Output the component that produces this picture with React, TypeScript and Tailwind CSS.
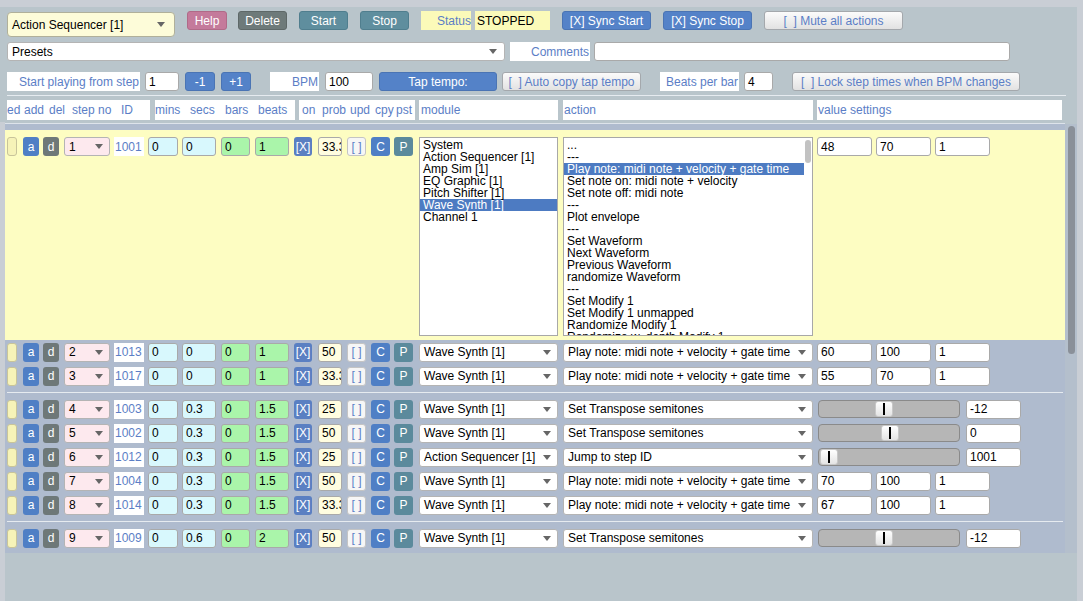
import React from "react";

const F = "font-['Liberation_Sans',Arial,Helvetica,sans-serif]";

function Arrow() {
  return (
    <svg width="8" height="5" viewBox="0 0 8 5" className="shrink-0">
      <path d="M0 0h8L4 5z" fill="#666" />
    </svg>
  );
}

function Btn({ cls, children }: { cls: string; children: React.ReactNode }) {
  return (
    <div
      className={`h-[19px] rounded-[3px] flex items-center justify-center text-white text-[12px] leading-none shrink-0 ${cls}`}
    >
      {children}
    </div>
  );
}

function LightBtn({ cls, children }: { cls: string; children: React.ReactNode }) {
  return (
    <div
      className={`h-[19px] rounded-[3px] border border-[#a4a8ac] bg-gradient-to-b from-[#fbfbfb] to-[#e2e2e2] flex items-center justify-center text-[#5b7ec6] text-[12px] leading-none shrink-0 ${cls}`}
    >
      {children}
    </div>
  );
}

function Label({ cls, children }: { cls: string; children: React.ReactNode }) {
  return (
    <div className={`h-[19px] flex items-center justify-end text-[#5b7ec6] text-[12px] shrink-0 ${cls}`}>
      {children}
    </div>
  );
}

function Input({ cls, v }: { cls: string; v: string }) {
  return (
    <div
      className={`h-[19px] rounded-[3px] border border-[#a9a9a9] flex items-center pl-[3px] text-black text-[12px] overflow-hidden whitespace-nowrap shrink-0 ${cls}`}
    >
      {v}
    </div>
  );
}

function Sel({ cls, v }: { cls: string; v: string }) {
  return (
    <div
      className={`h-[19px] rounded-[3px] border border-[#b4b4b4] flex items-center justify-between pl-[4px] pr-[6px] text-black text-[12px] overflow-hidden whitespace-nowrap shrink-0 ${cls}`}
    >
      <span>{v}</span>
      <Arrow />
    </div>
  );
}

type RowD = {
  step: string;
  id: string;
  mins: string;
  secs: string;
  bars: string;
  beats: string;
  prob: string;
  module: string;
  action: string;
  vals?: string[];
  slider?: number;
  sval?: string;
};

const rows1: RowD[] = [
  { step: "2", id: "1013", mins: "0", secs: "0", bars: "0", beats: "1", prob: "50", module: "Wave Synth [1]", action: "Play note: midi note + velocity + gate time", vals: ["60", "100", "1"] },
  { step: "3", id: "1017", mins: "0", secs: "0", bars: "0", beats: "1", prob: "33.3", module: "Wave Synth [1]", action: "Play note: midi note + velocity + gate time", vals: ["55", "70", "1"] },
];
const rows2: RowD[] = [
  { step: "4", id: "1003", mins: "0", secs: "0.3", bars: "0", beats: "1.5", prob: "25", module: "Wave Synth [1]", action: "Set Transpose semitones", slider: 56, sval: "-12" },
  { step: "5", id: "1002", mins: "0", secs: "0.3", bars: "0", beats: "1.5", prob: "50", module: "Wave Synth [1]", action: "Set Transpose semitones", slider: 62, sval: "0" },
  { step: "6", id: "1012", mins: "0", secs: "0.3", bars: "0", beats: "1.5", prob: "25", module: "Action Sequencer [1]", action: "Jump to step ID", slider: 1, sval: "1001" },
  { step: "7", id: "1004", mins: "0", secs: "0.3", bars: "0", beats: "1.5", prob: "50", module: "Wave Synth [1]", action: "Play note: midi note + velocity + gate time", vals: ["70", "100", "1"] },
  { step: "8", id: "1014", mins: "0", secs: "0.3", bars: "0", beats: "1.5", prob: "33.3", module: "Wave Synth [1]", action: "Play note: midi note + velocity + gate time", vals: ["67", "100", "1"] },
];
const rows3: RowD[] = [
  { step: "9", id: "1009", mins: "0", secs: "0.6", bars: "0", beats: "2", prob: "50", module: "Wave Synth [1]", action: "Set Transpose semitones", slider: 56, sval: "-12" },
];

function LeftCells({ r }: { r: RowD }) {
  return (
    <>
      <div className="w-[10px] h-[19px] rounded-[3px] border border-[#c8c49a] bg-[#f6f3b8] shrink-0" />
      <Btn cls="ml-[6px] w-[16px] bg-[#4f7fc5]">a</Btn>
      <Btn cls="ml-[4px] w-[16px] bg-[#6e7878]">d</Btn>
      <Sel cls="ml-[5px] w-[46px] bg-[#fde9ee]" v={r.step} />
      <div className="ml-[4px] w-[30px] h-[19px] bg-white text-[#5b7ec6] text-[12px] flex items-center pl-[1px] shrink-0">
        {r.id}
      </div>
      <Input cls="ml-[4px] w-[30px] bg-[#d8f8fd]" v={r.mins} />
      <Input cls="ml-[4px] w-[34px] bg-[#d8f8fd]" v={r.secs} />
      <Input cls="ml-[5px] w-[29px] bg-[#aaf5aa]" v={r.bars} />
      <Input cls="ml-[5px] w-[34px] bg-[#aaf5aa]" v={r.beats} />
      <Btn cls="ml-[5px] w-[18px] bg-[#5a7fc2]">[X]</Btn>
      <Input cls="ml-[6px] w-[24px] bg-[#fffde0] pl-[2px]" v={r.prob} />
      <div className="ml-[5px] w-[19px] h-[19px] rounded-[3px] border border-[#c4c4c4] bg-[#f6f6f6] text-[#5b7ec6] text-[12px] flex items-center justify-center shrink-0">
        [ ]
      </div>
      <Btn cls="ml-[5px] w-[19px] bg-[#4f7fc5]">C</Btn>
      <Btn cls="ml-[4px] w-[19px] bg-[#5b8a9c]">P</Btn>
    </>
  );
}

function Slider({ pos }: { pos: number }) {
  return (
    <div className="ml-[5px] w-[142px] h-[18px] rounded-[4px] border border-[#8a8a8a] bg-[#b6b6b6] flex items-center shrink-0">
      <div
        className="w-[18px] h-[16px] rounded-[3px] bg-gradient-to-b from-[#ffffff] to-[#e4e4e4] border border-[#c8c8c8] flex items-center justify-center"
        style={{ marginLeft: pos }}
      >
        <div className="w-[2px] h-[12px] bg-black" />
      </div>
    </div>
  );
}

function Row({ r }: { r: RowD }) {
  return (
    <div className="flex items-center h-[24px] pl-[2px]">
      <LeftCells r={r} />
      <Sel cls="ml-[6px] w-[139px] bg-white" v={r.module} />
      <Sel cls="ml-[5px] w-[250px] bg-white" v={r.action} />
      {r.vals ? (
        <>
          <Input cls="ml-[4px] w-[55px] bg-white" v={r.vals[0]} />
          <Input cls="ml-[4px] w-[55px] bg-white" v={r.vals[1]} />
          <Input cls="ml-[4px] w-[55px] bg-white" v={r.vals[2]} />
        </>
      ) : (
        <>
          <Slider pos={r.slider ?? 0} />
          <Input cls="ml-[6px] w-[55px] bg-white" v={r.sval ?? ""} />
        </>
      )}
    </div>
  );
}

const modules = ["System", "Action Sequencer [1]", "Amp Sim [1]", "EQ Graphic [1]", "Pitch Shifter [1]", "Wave Synth [1]", "Channel 1"];
const actions = [
  "...",
  "---",
  "Play note: midi note + velocity + gate time",
  "Set note on: midi note + velocity",
  "Set note off: midi note",
  "---",
  "Plot envelope",
  "---",
  "Set Waveform",
  "Next Waveform",
  "Previous Waveform",
  "randomize Waveform",
  "---",
  "Set Modify 1",
  "Set Modify 1 unmapped",
  "Randomize Modify 1",
  "Randomize w. depth Modify 1",
];

function Sep() {
  return <div className="h-px bg-[#e6ebf0] my-[4px] ml-[2px] mr-[2px]" />;
}

export default function App() {
  const r1: RowD = { step: "1", id: "1001", mins: "0", secs: "0", bars: "0", beats: "1", prob: "33.3", module: "", action: "" };
  return (
    <div className={`w-[1083px] h-[601px] overflow-hidden bg-[#c9ced5] text-[12px] flex flex-col ${F}`}>
      <div className="mt-[7px] w-[1077px] bg-[#b9c5cb] pt-[4px] pb-[2px] flex flex-col">
        {/* top row */}
        <div className="flex items-start h-[31px] pl-[7px]">
          <div className="mt-[1px] w-[168px] h-[25px] rounded-[4px] border border-[#b0b09a] bg-[#fdfcd9] flex items-center justify-between pl-[4px] pr-[9px] text-[12px] text-black shrink-0">
            <span>Action Sequencer [1]</span>
            <Arrow />
          </div>
          <Btn cls="ml-[12px] w-[40px] bg-[#c47a9b] border border-[#b06a88]">Help</Btn>
          <Btn cls="ml-[11px] w-[49px] bg-[#6e7a7a] border border-[#5e6868]">Delete</Btn>
          <Btn cls="ml-[12px] w-[49px] bg-[#5f8e9e] border border-[#507e8e]">Start</Btn>
          <Btn cls="ml-[12px] w-[49px] bg-[#5f8e9e] border border-[#507e8e]">Stop</Btn>
          <Label cls="ml-[12px] w-[50px] bg-[#fbfab9]">Status</Label>
          <div className="ml-[4px] w-[75px] h-[19px] bg-[#fbfab9] flex items-center pl-[2px] text-[12px] text-black shrink-0">
            STOPPED
          </div>
          <Btn cls="ml-[12px] w-[89px] bg-[#5482c8] border border-[#4a74b4]">[X] Sync Start</Btn>
          <Btn cls="ml-[12px] w-[89px] bg-[#5482c8] border border-[#4a74b4]">[X] Sync Stop</Btn>
          <LightBtn cls="ml-[12px] w-[139px]">[&nbsp;&nbsp;] Mute all actions</LightBtn>
        </div>
        {/* presets row */}
        <div className="flex items-center h-[19px] pl-[7px]">
          <Sel cls="w-[498px] bg-white pr-[7px]" v="Presets" />
          <Label cls="ml-[5px] w-[80px] bg-white pr-[1px]">Comments</Label>
          <Input cls="ml-[4px] w-[416px] bg-white" v="" />
        </div>
        {/* start row */}
        <div className="flex items-center h-[19px] mt-[11px] pl-[7px]">
          <Label cls="w-[133px] bg-white pr-[1px]">Start playing from step</Label>
          <Input cls="ml-[5px] w-[34px] bg-white" v="1" />
          <Btn cls="ml-[6px] w-[30px] bg-[#5482c8] border border-[#4a74b4]">-1</Btn>
          <Btn cls="ml-[6px] w-[30px] bg-[#5482c8] border border-[#4a74b4]">+1</Btn>
          <Label cls="ml-[19px] w-[49px] bg-white pr-[1px]">BPM</Label>
          <Input cls="ml-[6px] w-[48px] bg-white" v="100" />
          <Btn cls="ml-[6px] w-[118px] bg-[#5482c8] border border-[#4a74b4]">Tap tempo:</Btn>
          <LightBtn cls="ml-[5px] w-[139px]">[&nbsp;&nbsp;] Auto copy tap tempo</LightBtn>
          <Label cls="ml-[19px] w-[79px] bg-white pr-[1px]">Beats per bar</Label>
          <Input cls="ml-[5px] w-[29px] bg-white" v="4" />
          <LightBtn cls="ml-[19px] w-[228px]">[&nbsp;&nbsp;] Lock step times when BPM changes</LightBtn>
        </div>
        <div className="mt-[4px] ml-[7px] w-[1059px] h-px bg-[#e6ebf0]" />
        {/* header */}
        <div className="mt-[4px] flex h-[20px] pl-[7px] text-[#5b7ec6] text-[12px]">
          <div className="w-[143px] bg-white flex items-center">
            <span className="w-[17px]">ed</span>
            <span className="w-[25px]">add</span>
            <span className="w-[23px]">del</span>
            <span className="w-[49px]">step no</span>
            <span>ID</span>
          </div>
          <div className="ml-[5px] w-[140px] bg-white flex items-center">
            <span className="w-[35px]">mins</span>
            <span className="w-[35px]">secs</span>
            <span className="w-[33px]">bars</span>
            <span>beats</span>
          </div>
          <div className="ml-[4px] w-[116px] bg-white flex items-center pl-[3px]">
            <span className="w-[20px]">on</span>
            <span className="w-[28px]">prob</span>
            <span className="w-[25px]">upd</span>
            <span className="w-[21px]">cpy</span>
            <span>pst</span>
          </div>
          <div className="ml-[4px] w-[139px] bg-white flex items-center pl-[2px]">module</div>
          <div className="ml-[5px] w-[250px] bg-white flex items-center pl-[1px]">action</div>
          <div className="ml-[4px] w-[245px] bg-white flex items-center pl-[1px]">value settings</div>
        </div>
      </div>
      {/* lower panel */}
      <div className="ml-[5px] w-[1072px] flex-1 bg-[#b9c5cb] flex flex-col">
        <div className="mt-[1px] w-[1060px] h-px bg-[#dde3ea]" />
        <div className="flex">
          <div className="w-[1060px] bg-[#afbbce] pt-[6px] pb-[3px]">
            <div className="bg-[#fdfdc2] pt-[7px] pb-[4px] flex items-start pl-[2px]">
              <div className="flex items-center h-[19px]">
                <LeftCells r={r1} />
              </div>
              <div className="ml-[6px] w-[139px] h-[199px] bg-white border border-[#a8a8a8] pt-[1px] text-[12px] leading-[12px] text-black overflow-hidden">
                {modules.map((m, i) => (
                  <div key={i} className={`pl-[3px] ${i === 5 ? "bg-[#4d7bc2] text-white" : ""}`}>
                    {m}
                  </div>
                ))}
              </div>
              <div className="ml-[5px] w-[250px] h-[199px] bg-white border border-[#a8a8a8] text-[12px] leading-[12px] text-black overflow-hidden flex">
                <div className="flex-1 pt-[1px]">
                  {actions.map((a, i) => (
                    <div key={i} className={`pl-[3px] whitespace-nowrap ${i === 2 ? "bg-[#4d7bc2] text-white" : ""}`}>
                      {a}
                    </div>
                  ))}
                </div>
                <div className="w-[8px] shrink-0 pt-[2px] pl-[1px] bg-white">
                  <div className="w-[6px] h-[23px] rounded-[3px] bg-[#c2c2c2]" />
                </div>
              </div>
              <div className="flex items-center h-[19px]">
                <Input cls="ml-[4px] w-[55px] bg-white" v="48" />
                <Input cls="ml-[4px] w-[55px] bg-white" v="70" />
                <Input cls="ml-[4px] w-[55px] bg-white" v="1" />
              </div>
            </div>
            {rows1.map((r, i) => (
              <Row key={i} r={r} />
            ))}
            <Sep />
            {rows2.map((r, i) => (
              <Row key={i} r={r} />
            ))}
            <Sep />
            {rows3.map((r, i) => (
              <Row key={i} r={r} />
            ))}
          </div>
          <div className="w-[12px] flex justify-center bg-[#b4bfcc]">
            <div className="mt-[2px] w-[7px] h-[228px] rounded-[4px] bg-[#8a9099]" />
          </div>
        </div>
      </div>
    </div>
  );
}
